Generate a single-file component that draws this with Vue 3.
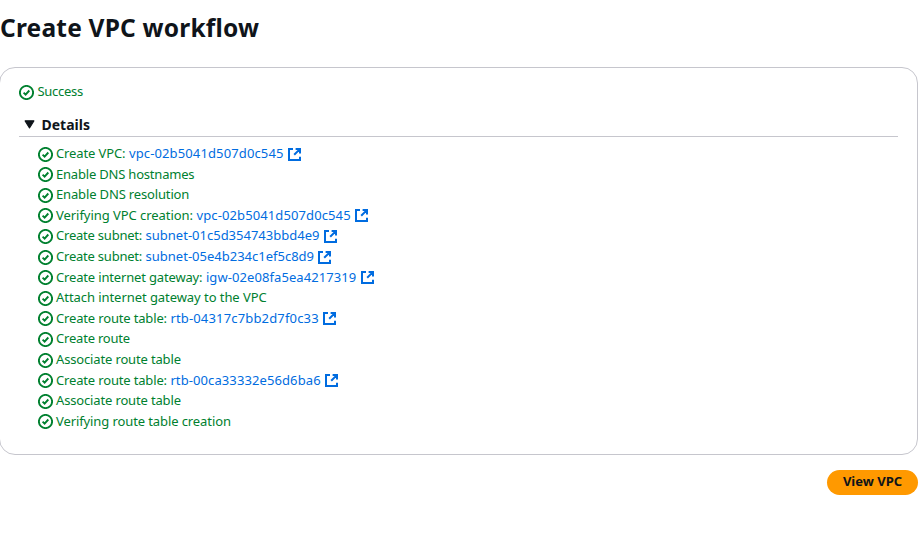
<script setup>
// `tracking` and `linkTracking` are letter spacings in px.
const steps = [
  { label: 'Create VPC:', tracking: -0.12, link: 'vpc-02b5041d507d0c545', linkTracking: 0.13 },
  { label: 'Enable DNS hostnames', tracking: -0.2 },
  { label: 'Enable DNS resolution', tracking: -0.15 },
  { label: 'Verifying VPC creation:', tracking: -0.05, link: 'vpc-02b5041d507d0c545', linkTracking: 0.11 },
  { label: 'Create subnet:', tracking: -0.22, link: 'subnet-01c5d354743bbd4e9', linkTracking: 0 },
  { label: 'Create subnet:', tracking: -0.22, link: 'subnet-05e4b234c1ef5c8d9', linkTracking: 0 },
  { label: 'Create internet gateway:', tracking: -0.16, link: 'igw-02e08fa5ea4217319', linkTracking: 0.08 },
  { label: 'Attach internet gateway to the VPC', tracking: -0.06 },
  { label: 'Create route table:', tracking: -0.16, link: 'rtb-04317c7bb2d7f0c33', linkTracking: 0.16 },
  { label: 'Create route', tracking: -0.2 },
  { label: 'Associate route table', tracking: -0.15 },
  { label: 'Create route table:', tracking: -0.16, link: 'rtb-00ca33332e56d6ba6', linkTracking: 0.1 },
  { label: 'Associate route table', tracking: -0.15 },
  { label: 'Verifying route table creation', tracking: -0.1 },
]
</script>

<template>
  <main class="page">
    <h1>Create VPC workflow</h1>
    <section class="card">
      <div class="status">
        <svg class="check" viewBox="0 0 15 15"><circle cx="7.5" cy="7.5" r="6.6" /><path d="m4.6 7.6 2 2 3.7-4.1" /></svg>
        <span>Success</span>
      </div>
      <div class="details">
        <svg class="caret" viewBox="0 0 10 8"><path d="M1 .7h8L5 7.2z" /></svg>
        <h2>Details</h2>
      </div>
      <ul>
        <li v-for="(step, i) in steps" :key="i">
          <svg class="check" viewBox="0 0 15 15"><circle cx="7.5" cy="7.5" r="6.6" /><path d="m4.6 7.6 2 2 3.7-4.1" /></svg>
          <span class="label" :style="{ letterSpacing: step.tracking + 'px' }">{{ step.label }}</span>
          <a v-if="step.link" :style="{ letterSpacing: step.linkTracking + 'px' }">{{ step.link }}</a>
          <svg v-if="step.link" class="external" viewBox="0 0 13 13">
            <path d="M5 1H1v11h11V8.8M7.6 1H12v4.4M11.6 1.4 6.2 6.8" />
          </svg>
        </li>
      </ul>
    </section>
    <div class="actions"><button>View VPC</button></div>
  </main>
</template>

<style>
body {
  background: #fff;
  overflow: hidden;
}
</style>

<style scoped>
.page {
  width: 919px;
  margin-left: -1px;
  font-family: 'Noto Sans', 'Open Sans', sans-serif;
  font-size: 13px;
  color: #0f141a;
}
h1 {
  margin: 0;
  padding: 12px 0 23px 1px;
  font-size: 24.5px;
  line-height: 32px;
  font-weight: 700;
  letter-spacing: 0.2px;
  white-space: nowrap;
}
.card {
  box-sizing: border-box;
  height: 388px;
  padding: 14px 19px 0 19px;
  border: 1px solid #c6c6cd;
  border-radius: 16px;
}
.status {
  display: flex;
  align-items: center;
  gap: 3.5px;
  height: 20px;
  color: #00802f;
  letter-spacing: -0.3px;
}
.status span {
  padding-bottom: 2px;
}
.check {
  flex: none;
  width: 15px;
  height: 15px;
  position: relative;
  top: 0.5px;
  fill: none;
  stroke: #00802f;
  stroke-width: 1.9;
}
.details {
  display: flex;
  align-items: center;
  gap: 6.5px;
  height: 22px;
  margin-top: 12px;
  padding-left: 5px;
  border-bottom: 1px solid #c6c6cd;
}
.caret {
  width: 11px;
  height: 9px;
  position: relative;
  top: -0.5px;
  fill: #0f141a;
  stroke: #0f141a;
  stroke-linejoin: round;
}
h2 {
  margin: 0;
  font-size: 14px;
  line-height: 20px;
  font-weight: 700;
}
ul {
  margin: 0;
  padding: 6.4px 0 0 19px;
  list-style: none;
}
li {
  display: flex;
  align-items: center;
  height: 20.6px;
  white-space: nowrap;
}
.label {
  margin-left: 3px;
  padding-bottom: 1.2px;
  color: #00802f;
}
a {
  margin-left: 3.5px;
  padding-bottom: 1.2px;
  color: #006ce0;
}
.external {
  width: 13px;
  height: 13px;
  margin-left: 4.2px;
  position: relative;
  top: 0.5px;
  fill: none;
  stroke: #006ce0;
  stroke-width: 2;
}
.actions {
  display: flex;
  justify-content: flex-end;
  padding-top: 15px;
}
button {
  width: 91px;
  height: 25px;
  padding: 0 0 3px;
  border: 0;
  border-radius: 13px;
  background: #ff9900;
  color: #0f141a;
  font: 700 13px/20px 'Noto Sans', sans-serif;
  white-space: nowrap;
}
</style>
